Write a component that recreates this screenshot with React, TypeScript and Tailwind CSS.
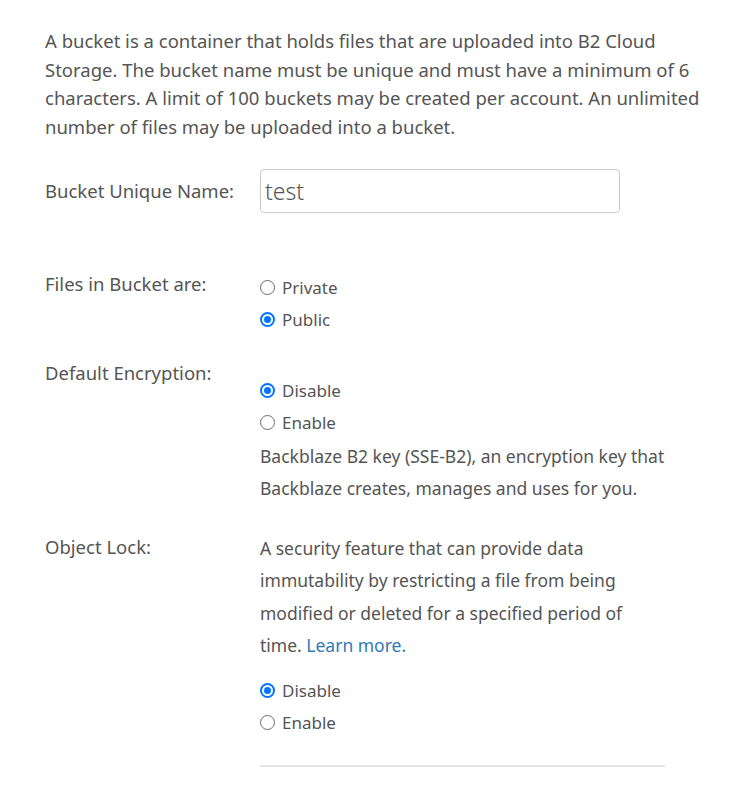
import { useState } from "react";

type Opt = { value: string; label: string };

function Radio({ checked, label, onClick }: { checked: boolean; label: string; onClick: () => void }) {
  return (
    <label className="flex h-8 cursor-pointer items-center gap-[7px]" onClick={onClick}>
      {checked ? (
        <span className="flex h-[15px] w-[15px] items-center justify-center rounded-full border-2 border-[#0075ff] bg-white">
          <span className="h-[7px] w-[7px] rounded-full bg-[#0075ff]" />
        </span>
      ) : (
        <span className="h-[15px] w-[15px] rounded-full border border-[#6b6b6b] bg-white" />
      )}
      <span>{label}</span>
    </label>
  );
}

function RadioGroup({ options, value, onChange }: { options: Opt[]; value: string; onChange: (v: string) => void }) {
  return (
    <div className="flex flex-col text-[17px]">
      {options.map((o) => (
        <Radio key={o.value} checked={value === o.value} label={o.label} onClick={() => onChange(o.value)} />
      ))}
    </div>
  );
}

const onOff: Opt[] = [
  { value: "disable", label: "Disable" },
  { value: "enable", label: "Enable" },
];

export default function App() {
  const [name, setName] = useState("test");
  const [access, setAccess] = useState("public");
  const [encryption, setEncryption] = useState("disable");
  const [lock, setLock] = useState("disable");

  return (
    <div className="min-h-screen bg-white pl-[45px] pr-[30px] pt-[27px] text-[18.5px] text-[#555] [font-family:'Noto_Sans','Open_Sans',sans-serif]">
      <p className="text-[18.5px] leading-[28.7px]">
        A bucket is a container that holds files that are uploaded into B2 Cloud Storage. The bucket name must be
        unique and must have a minimum of 6 characters. A limit of 100 buckets may be created per account. An
        unlimited number of files may be uploaded into a bucket.
      </p>

      <div className="mt-[27px] grid grid-cols-[215px_360px] items-center">
        <label className="leading-7">Bucket Unique Name:</label>
        <input
          value={name}
          onChange={(e) => setName(e.target.value)}
          className="h-[44px] w-[360px] rounded-[4px] border border-[#ccc] px-[4px] text-[23px] font-light text-[#555] outline-none"
        />
      </div>

      <div className="mt-[57px] grid grid-cols-[215px_1fr]">
        <div className="leading-7">Files in Bucket are:</div>
        <div className="pt-[2px]">
          <RadioGroup
            options={[
              { value: "private", label: "Private" },
              { value: "public", label: "Public" },
            ]}
            value={access}
            onChange={setAccess}
          />
        </div>
      </div>

      <div className="mt-[23px] grid grid-cols-[215px_1fr]">
        <div className="leading-7">Default Encryption:</div>
        <div className="pt-4">
          <RadioGroup options={onOff} value={encryption} onChange={setEncryption} />
          <p className="w-[420px] pt-[1px] text-[17.5px] leading-[32.5px]">
            Backblaze B2 key (SSE-B2), an encryption key that Backblaze creates, manages and uses for you.
          </p>
        </div>
      </div>

      <div className="mt-[27px] grid grid-cols-[215px_1fr]">
        <div className="pt-[1px] leading-7">Object Lock:</div>
        <div className="w-[405px]">
          <p className="w-[380px] text-[17.5px] leading-[32.5px]">
            A security feature that can provide data immutability by restricting a file from being modified or
            deleted for a specified period of time. <span className="text-[#337ab7]">Learn more.</span>
          </p>
          <div className="mt-[13px]">
            <RadioGroup options={onOff} value={lock} onChange={setLock} />
          </div>
          <hr className="mt-[26px] border-t-2 border-[#e5e5e5]" />
        </div>
      </div>
    </div>
  );
}
